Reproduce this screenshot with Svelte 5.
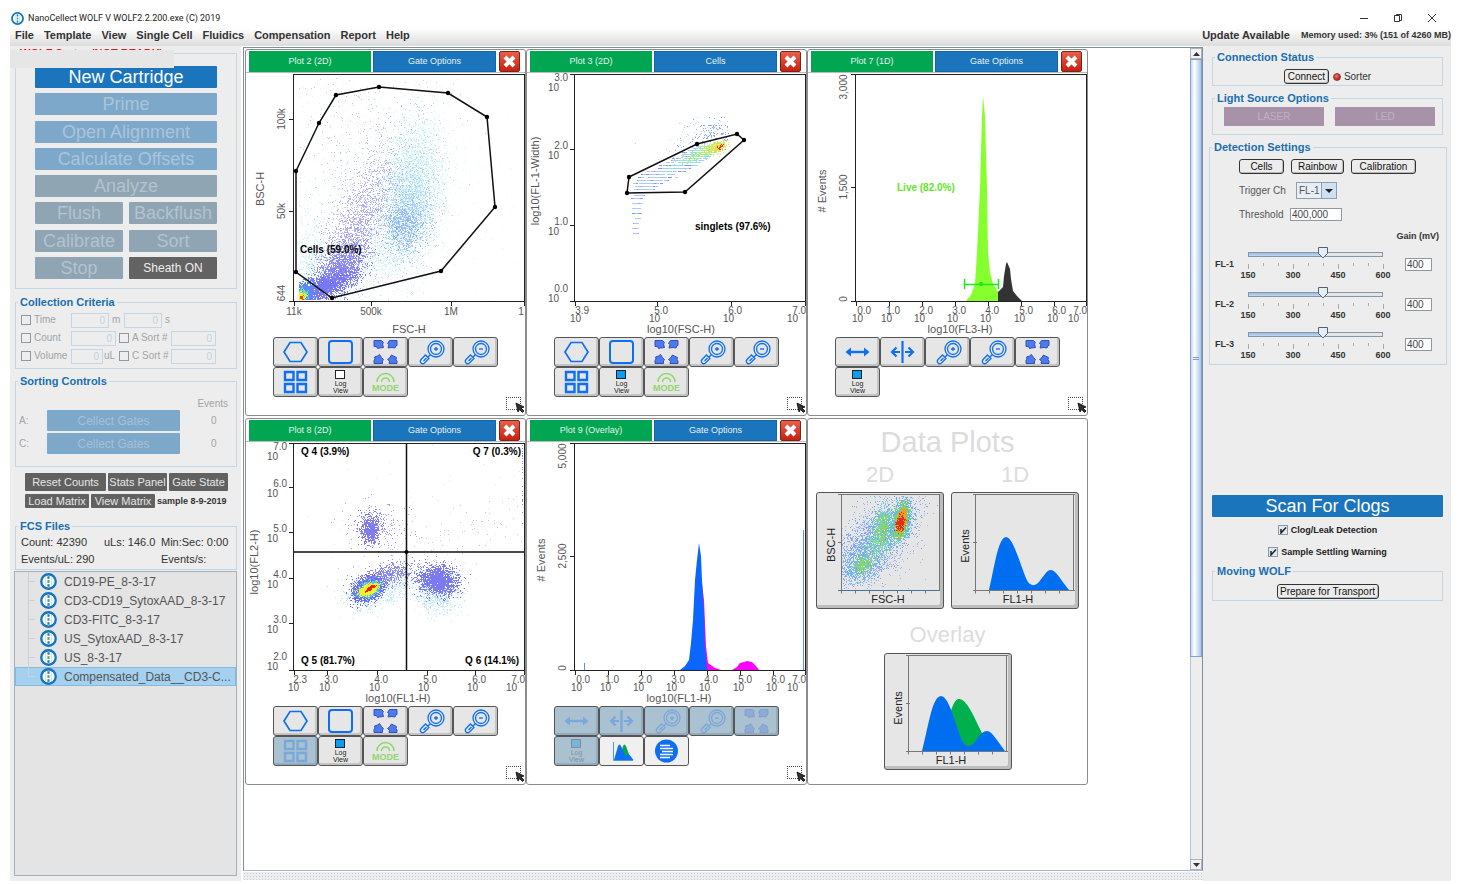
<script lang="ts">
  const menus = ['File', 'Template', 'View', 'Single Cell', 'Fluidics', 'Compensation', 'Report', 'Help'];

  const files = [
    'CD19-PE_8-3-17',
    'CD3-CD19_SytoxAAD_8-3-17',
    'CD3-FITC_8-3-17',
    'US_SytoxAAD_8-3-17',
    'US_8-3-17',
    'Compensated_Data__CD3-C...'
  ];
  let selected = 5;

  let trigger = 'FL-1';
  let threshold = '400,000';
  let clogDetection = true;
  let settlingWarning = true;
  let channels = [
    { name: 'FL-1', gain: 400 },
    { name: 'FL-2', gain: 400 },
    { name: 'FL-3', gain: 400 }
  ];

  // small seeded generator so the plots look the same on every load
  let seed = 7;
  function rnd() {
    seed = (seed + 0x6d2b79f5) | 0;
    let t = Math.imul(seed ^ (seed >>> 15), 1 | seed);
    t = (t + Math.imul(t ^ (t >>> 7), 61 | t)) ^ t;
    return ((t ^ (t >>> 14)) >>> 0) / 4294967296;
  }
  function gauss() {
    return Math.sqrt(-2 * Math.log(rnd() + 1e-9)) * Math.cos(6.2832 * rnd());
  }

  type Box = [number, number, number, number];
  type Dots = { d: string; color: string };

  // n events round (cx, cy), tilted by deg, kept inside the box
  function cloud(n: number, cx: number, cy: number, sx: number, sy: number, deg: number, color: string, box: Box): Dots {
    const a = (deg * Math.PI) / 180;
    let d = '';
    for (let i = 0; i < n; i++) {
      const u = gauss() * sx;
      const v = gauss() * sy;
      const x = Math.round(cx + u * Math.cos(a) - v * Math.sin(a));
      const y = Math.round(cy + u * Math.sin(a) + v * Math.cos(a));
      if (x < box[0] || x > box[2] || y < box[1] || y > box[3]) continue;
      d += `M${x} ${y}h1v1h-1z`;
    }
    return { d, color };
  }

  const b2: Box = [53, 3, 276, 226];
  const cells: Dots[] = [
    cloud(900, 130, 100, 50, 60, -50, '#e0f6fa', b2),
    cloud(380, 125, 75, 40, 50, 0, '#d0c2ea', b2),
    cloud(3200, 164, 122, 16, 38, 8, '#d8f5fb', b2),
    cloud(1300, 164, 124, 13, 32, 8, '#b8e4f7', b2),
    cloud(900, 160, 145, 13, 20, 8, '#a9cdf5', b2),
    cloud(420, 157, 155, 10, 11, 8, '#97b4f1', b2),
    cloud(800, 66, 195, 12, 26, 0, '#ccf5f6', b2),
    cloud(1000, 120, 190, 34, 12, -40, '#dcf3fb', b2),
    cloud(1000, 108, 150, 44, 15, -66, '#ccc8f4', b2),
    cloud(1300, 108, 160, 38, 11, -65, '#aeabf2', b2),
    cloud(1500, 92, 197, 17, 9, -48, '#8f8cf1', b2),
    cloud(1900, 74, 215, 18, 6, -22, '#7a77f2', b2),
    cloud(600, 58, 219, 5, 5, 0, '#5b8cf5', b2),
    cloud(260, 56, 222, 3, 3, 0, '#62e0c0', b2),
    cloud(160, 55, 223, 2, 2, 0, '#f2f22c', b2),
    cloud(30, 55, 224, 1, 1, 0, '#f03c1e', b2)
  ];

  // width values are discrete, so the events fall on horizontal streaks
  function streaks(): Dots[] {
    const out: Record<string, string> = {};
    for (let y = 160; y > 71; y -= y > 126 ? 5 : y > 90 ? 3 : 2) {
      const left = y > 104 ? 104 : 104 + (104 - y) * 2;
      const right = y > 126 ? 110 + (160 - y) * 0.2 : 204 - (y - 72) * 1.7;
      const n = (right - left) * (y > 126 ? 0.6 : 0.75);
      for (let i = 0; i < n; i++) {
        const f = (rnd() + rnd()) / 2;
        const x = Math.round(left + f * (right - left));
        const hot = (x - 95) / 100 - Math.abs(f - 0.5) * 0.9 + rnd() * 0.15;
        const c = hot > 0.95 ? '#f3e24a' : hot > 0.75 ? '#b5ef8c' : hot > 0.5 ? '#93dcee' : rnd() > 0.5 ? '#8496ef' : '#b0caf7';
        out[c] = (out[c] || '') + `M${x} ${y}h3v1h-3z`;
      }
    }
    return Object.entries(out).map(([color, d]) => ({ color, d }));
  }
  const b3: Box = [100, 44, 203, 120];
  const singlets: Dots[] = [
    cloud(130, 185, 58, 12, 8, -15, '#86a6f0', b3),
    cloud(90, 172, 64, 22, 10, -15, '#b4dcf4', b3),
    ...streaks(),
    cloud(150, 172, 80, 14, 3, -22, '#a6ea9a', b3),
    cloud(200, 188, 75, 8, 3, -18, '#c4f062', b3),
    cloud(90, 192, 73, 4, 2, -15, '#f4d83a', b3),
    cloud(22, 193, 73, 2, 1, -25, '#e8331c', b3)
  ];

  const b8: Box = [50, 3, 276, 226];
  const quads: Dots[] = [
    cloud(120, 200, 95, 60, 14, -18, '#c8c2ea', b8),
    cloud(60, 190, 60, 90, 30, 0, '#e4e0f4', b8),
    cloud(190, 131, 84, 16, 12, 0, '#a3a0ee', b8),
    cloud(680, 124, 87, 5, 7, 0, '#7f7bf0', b8),
    cloud(520, 140, 145, 17, 8, -10, '#bfeaf8', b8),
    cloud(650, 139, 133, 13, 5, -14, '#8f8cf0', b8),
    cloud(900, 192, 147, 11, 11, 6, '#bfe8f9', b8),
    cloud(1700, 191, 138, 10, 7, 6, '#7d79f0', b8),
    cloud(300, 118, 152, 11, 8, 0, '#b5e8f6', b8),
    cloud(2400, 121, 147, 7, 5, -25, '#706df2', b8),
    cloud(1400, 122, 147, 5, 3, -25, '#4fc9ee', b8),
    cloud(1400, 122, 147, 4, 2, -25, '#f5f02a', b8),
    cloud(80, 124, 146, 3, 1, -30, '#e8261a', b8),
    cloud(30, 276, 30, 0, 26, 0, '#8a86ee', b8)
  ];

  const bt: Box = [26, 4, 121, 96];
  const thumb: Dots[] = [
    cloud(1100, 58, 50, 32, 16, -48, '#a9b4f2', bt),
    cloud(1600, 58, 50, 28, 12, -50, '#7ba5f0', bt),
    cloud(500, 42, 74, 10, 9, -30, '#72b8f0', bt),
    cloud(500, 67, 36, 6, 12, 10, '#6fd3d6', bt),
    cloud(320, 66, 36, 4, 8, 10, '#85d95e', bt),
    cloud(200, 46, 72, 5, 4, -20, '#85d95e', bt),
    cloud(260, 58, 55, 7, 7, 0, '#86dcb0', bt),
    cloud(1000, 85, 29, 5, 9, 12, '#5fb9ee', bt),
    cloud(900, 85, 29, 3, 8, 12, '#7be04e', bt),
    cloud(500, 85, 29, 2, 6, 12, '#f09a24', bt),
    cloud(200, 84, 31, 2, 4, 12, '#e42c1a', bt)
  ];

  const polyCells = [[50, 98], [73, 50], [90, 22], [133, 14], [202, 20], [241, 44], [249, 134], [195, 198], [86, 225], [50, 199]];
  const polySinglets = [[102, 104], [170, 71], [210, 61], [217, 67], [158, 119], [100, 120]];

  const decades = [
    { t: 48, x: 49, e: '0.0' },
    { t: 81, x: 78, e: '1.0' },
    { t: 114, x: 111, e: '2.0' },
    { t: 147, x: 144, e: '3.0' },
    { t: 180, x: 177, e: '4.0' },
    { t: 213, x: 211, e: '5.0' },
    { t: 246, x: 244, e: '6.0' },
    { t: 278, x: 265, e: '7.0' }
  ];

  type Tick = { t: number; x?: number; y?: number; e?: string; label?: string };
  type Plot = {
    kind: string; name: string; gate: string; xTitle: string; xMid: number; yTitle: string; yBase: number; yMid: number;
    x: Tick[]; y: Tick[]; dots?: Dots[]; poly?: number[][]; tools: string[]; off?: string[]; log?: boolean;
  };

  const tools2d = ['hexagon', 'square', 'fit', 'zoomIn', 'zoomOut', 'quad', 'log', 'mode'];
  const plots: Plot[] = [
    {
      kind: 'cells', name: 'Plot 2 (2D)', gate: 'Gate Options', xTitle: 'FSC-H', xMid: 163, yTitle: 'BSC-H', yBase: 18, yMid: 116,
      x: [{ t: 48, x: 48, label: '11k' }, { t: 125, x: 125, label: '500k' }, { t: 205, x: 205, label: '1M' }, { t: 278, x: 275, label: '1' }],
      y: [{ t: 46, y: 46, label: '100k' }, { t: 138, y: 138, label: '50k' }, { t: 228, y: 220, label: '644' }],
      dots: cells, poly: polyCells, tools: tools2d, log: false
    },
    {
      kind: 'singlets', name: 'Plot 3 (2D)', gate: 'Cells', xTitle: 'log10(FSC-H)', xMid: 154, yTitle: 'log10(FL-1-Width)', yBase: 12, yMid: 108,
      x: [{ t: 48, x: 48, e: '3.9' }, { t: 130, x: 127, e: '5.0' }, { t: 204, x: 201, e: '6.0' }, { t: 278, x: 265, e: '7.0' }],
      y: [{ t: 1, y: 8, e: '3.0' }, { t: 76, y: 76, e: '2.0' }, { t: 152, y: 152, e: '1.0' }, { t: 228, y: 219, e: '0.0' }],
      dots: singlets, poly: polySinglets, tools: tools2d, log: true
    },
    {
      kind: 'live', name: 'Plot 7 (1D)', gate: 'Gate Options', xTitle: 'log10(FL3-H)', xMid: 152, yTitle: '# Events', yBase: 18, yMid: 118,
      x: decades,
      y: [{ t: 1, y: 14, label: '3,000' }, { t: 114, y: 114, label: '1,500' }, { t: 228, y: 226, label: '0' }],
      tools: ['span', 'split', 'zoomIn', 'zoomOut', 'fit', 'log'], log: true
    },
    {
      kind: 'quads', name: 'Plot 8 (2D)', gate: 'Gate Options', xTitle: 'log10(FL1-H)', xMid: 152, yTitle: 'log10(FL2-H)', yBase: 12, yMid: 120,
      x: [{ t: 48, x: 47, e: '2.3' }, { t: 81, x: 78, e: '3.0' }, { t: 131, x: 128, e: '4.0' }, { t: 181, x: 177, e: '5.0' }, { t: 229, x: 226, e: '6.0' }, { t: 278, x: 265, e: '7.0' }],
      y: [{ t: 1, y: 8, e: '7.0' }, { t: 45, y: 45, e: '6.0' }, { t: 90, y: 90, e: '5.0' }, { t: 136, y: 136, e: '4.0' }, { t: 181, y: 181, e: '3.0' }, { t: 228, y: 218, e: '2.0' }],
      dots: quads, tools: tools2d, off: ['quad'], log: true
    },
    {
      kind: 'overlay', name: 'Plot 9 (Overlay)', gate: 'Gate Options', xTitle: 'log10(FL1-H)', xMid: 152, yTitle: '# Events', yBase: 18, yMid: 118,
      x: decades,
      y: [{ t: 1, y: 14, label: '5,000' }, { t: 114, y: 114, label: '2,500' }, { t: 228, y: 226, label: '0' }],
      tools: ['span', 'split', 'zoomIn', 'zoomOut', 'fit', 'log', 'histogram', 'legend'],
      off: ['span', 'split', 'zoomIn', 'zoomOut', 'fit', 'log'], log: true
    }
  ];
</script>

{#snippet logo(size)}
  <svg width={size} height={size} viewBox="0 0 16 16" aria-hidden="true">
    <circle cx="8" cy="8" r="6.8" fill="#fff" stroke="#1474bd" stroke-width="2.2" />
    <path d="M5.4 4.2v7.6M10.6 4.2v7.6" stroke="#b5d8ef" stroke-width=".8" />
    <path d="M7 3h2v2.4H7zM7 10.600h2V13H7z" fill="#1474bd" />
    <path d="M7 6.800h2v2.400H7z" fill="#2eaa55" />
  </svg>
{/snippet}

{#snippet dotPaths(list)}
  <g shape-rendering="crispEdges">
    {#each list as p}<path d={p.d} fill={p.color} />{/each}
  </g>
{/snippet}

{#snippet lens()}
  <circle cx="25" cy="11" r="8" />
  <circle cx="25" cy="11" r="5.500" />
  <path d="M19.500 16.500l-3 3M14.500 17l3.500 3.500-4.500 4.500q-2 1.500-3.500 0t0-3.500zM15.500 20l-3 3" />
{/snippet}

{#snippet toolIcon(name, log)}
  {#if name === 'log'}
    <span class="log"><i class:filled={log}></i>Log<br />View</span>
  {:else}
    <svg width="39" height="28" viewBox="0 0 39 28" fill="none" stroke="#0f6ff2" stroke-width="1.500" aria-hidden="true">
      {#if name === 'hexagon'}
        <path d="M8 14l6-9.500h11l6 9.500-6 9.500H14z" stroke-width="1.700" />
      {:else if name === 'square'}
        <rect x="8" y="3" width="23" height="22" rx="3" stroke-width="2" />
      {:else if name === 'fit'}
        <g fill="#4b7bf0" stroke="#3b4fb0" stroke-width="1">
          <path d="M8 2.500h7.500l2 2-1 1.500 1 3.500-4 .5-2 .5-1-2H8z" />
          <path d="M31 2.500h-7.500l-2 3 1.500 1-1 3.500 4-.5 3 .5 1-2.500h1z" />
          <path d="M8 25.500h8.500v-2.500l1-1.500-2-2-2-3-2 1.500-3 1 .5 2-1 1.500z" />
          <path d="M31 25.500h-8l.5-2.500-2-1.500 2-1.500 2-3 2 1 3 1.500-.5 2 1 1.500z" />
        </g>
      {:else if name === 'zoomIn'}
        <g stroke-width="1.300">{@render lens()}<path d="M25 9v4M23 11h4" /></g>
      {:else if name === 'zoomOut'}
        <g stroke-width="1.300">{@render lens()}<path d="M23 11h4" /></g>
      {:else if name === 'quad'}
        <path d="M9 4h8.500v8H9zM21.500 4H30v8h-8.500zM9 16h8.500v8H9zM21.500 16H30v8h-8.500z" stroke-width="2.400" />
      {:else if name === 'mode'}
        <g stroke="#8fd86a" stroke-width="1.600">
          <path d="M11 14a8.500 8.500 0 0 1 17 0M15.500 14a4 4 0 0 1 8 0" />
          <text x="19.500" y="23" class="mode-text">MODE</text>
        </g>
      {:else if name === 'span'}
        <path d="M9 14h21" stroke-width="2.400" />
        <path d="M13 9.500L7.500 14l5.500 4.500zM26 9.500l5.500 4.500-5.500 4.500z" fill="#0f6ff2" stroke="none" />
      {:else if name === 'split'}
        <path d="M19.500 3v22M9 14h8M22 14h8" stroke-width="2.200" />
        <path d="M13.500 9.500L9 14l4.500 4.500M25.500 9.500L30 14l-4.500 4.500" stroke-width="2.200" />
      {:else if name === 'histogram'}
        <path d="M17 23l4-14q1.500-3 3 0l5 14z" fill="#0aa64c" stroke="none" />
        <path d="M12 23l4-14q1.500-3 3 0l4 9q1 2 2 0 1.500-2 3.500 1l3 4z" fill="#0f6ff2" stroke="none" />
        <path d="M11.500 5v18.500H31" stroke="#4d9ad0" stroke-width="1" />
      {:else if name === 'legend'}
        <circle cx="19.500" cy="14" r="11.500" fill="#0f6ff2" stroke="none" />
        <path d="M13 8.500h10M13 11.500h13M15 14.500h11M13 17.500h13M13 20.500h10" stroke="#fff" />
      {/if}
    </svg>
  {/if}
{/snippet}

<div class="window">
  <header class="titlebar">
    {@render logo(13)}
    <span class="title">NanoCellect WOLF V WOLF2.2.200.exe (C) 2019</span>
    <div class="winbtns">
      <button aria-label="Minimize"><svg width="10" height="10"><path d="M1 5.500h8" stroke="#333" /></svg></button>
      <button aria-label="Restore"><svg width="10" height="10" fill="none" stroke="#333"><path d="M1.500 2.500h5v6h-5zM3.500 2.500v-1h5v6h-2" /></svg></button>
      <button aria-label="Close"><svg width="10" height="10"><path d="M1 1l8 8M9 1L1 9" stroke="#333" /></svg></button>
    </div>
  </header>

  <nav class="menubar">
    {#each menus as m}<button>{m}</button>{/each}
    <button class="update">Update Available</button>
    <span class="memory">Memory used: 3% (151 of 4260 MB)</span>
  </nav>

  <div class="body">
    <aside class="left">
      <div class="mask"></div>
      <fieldset>
        <legend class="alert">WOLF Sorter (NOT READY)</legend>
        <div class="cmds">
          <button class="cmd wide">New Cartridge</button>
          <button class="cmd wide blue" disabled>Prime</button>
          <button class="cmd wide blue" disabled>Open Alignment</button>
          <button class="cmd wide blue" disabled>Calculate Offsets</button>
          <button class="cmd wide grey" disabled>Analyze</button>
          <button class="cmd grey" disabled>Flush</button>
          <button class="cmd grey" disabled>Backflush</button>
          <button class="cmd grey" disabled>Calibrate</button>
          <button class="cmd grey" disabled>Sort</button>
          <button class="cmd grey" disabled>Stop</button>
          <button class="cmd sheath">Sheath ON</button>
        </div>
      </fieldset>

      <fieldset class="criteria">
        <legend>Collection Criteria</legend>
        <div class="inner">
          <div class="crit">
            <label class="c1"><input type="checkbox" disabled />Time</label>
            <input class="num mid" aria-label="Minutes" value="0" disabled /><span class="unit">m</span>
            <input class="num mid" aria-label="Seconds" value="0" disabled /><span class="unit">s</span>
          </div>
          <div class="crit">
            <label class="c1"><input type="checkbox" disabled />Count</label>
            <input class="num long" aria-label="Count" value="0" disabled />
            <label class="c2"><input type="checkbox" disabled />A Sort #</label>
            <input class="num long" aria-label="A sort number" value="0" disabled />
          </div>
          <div class="crit">
            <label class="c1"><input type="checkbox" disabled />Volume</label>
            <input class="num short" aria-label="Volume" value="0" disabled /><span class="ul">uL</span>
            <label class="c2"><input type="checkbox" disabled />C Sort #</label>
            <input class="num long" aria-label="C sort number" value="0" disabled />
          </div>
        </div>
      </fieldset>

      <fieldset class="sorting">
        <legend>Sorting Controls</legend>
        <div class="inner">
          <div class="events">Events</div>
          <div class="gate-row"><span>A:</span><button disabled>Cellect Gates</button><output>0</output></div>
          <div class="gate-row"><span>C:</span><button disabled>Cellect Gates</button><output>0</output></div>
        </div>
      </fieldset>

      <div class="dark-row tall">
        <button class="reset">Reset Counts</button>
        <button>Stats Panel</button>
        <button>Gate State</button>
      </div>
      <div class="dark-row">
        <button>Load Matrix</button>
        <button>View Matrix</button>
        <b>sample 8-9-2019</b>
      </div>

      <fieldset class="fcs">
        <legend>FCS Files</legend>
        <div class="stats">
          <span>Count: 42390</span><span>uLs: 146.0</span><span>Min:Sec: 0:00</span>
          <span>Events/uL: 290</span><span></span><span>Events/s:</span>
        </div>
      </fieldset>

      <ul class="tree">
        {#each files as f, i}
          <li class:selected={i === selected}>
            <button on:click={() => (selected = i)}><i class="branch"></i>{@render logo(17)}<span>{f}</span></button>
          </li>
        {/each}
      </ul>
    </aside>

    <main>
      <div class="view">
        <div class="plots">
          {#each plots as p}
            <section class="plot">
              <div class="plot-head">
                <button class="name">{p.name}</button>
                <button class="gate">{p.gate}</button>
                <button class="close" aria-label="Close plot"><svg width="19" height="19"><path d="M5 5l9 9M14 5l-9 9" stroke="#fff" stroke-width="4" /></svg></button>
              </div>
              <svg class="chart" width="279" height="264" viewBox="0 0 279 264">
                {#if p.dots}{@render dotPaths(p.dots)}{/if}
                {#if p.kind === 'live'}
                  <path d="M158 228l5-6 4-11 2-32 3-63 2-73 1-20 2 20 2 73 1 63 2 20 3 12 5 8v9z" fill="#86ff2e" />
                  <path d="M190 228v-9l5-5 1-11 2-12 1-2 3 7 1 10 2 12 4 5 5 5z" fill="#333" />
                  <path d="M156.500 206v10M156 211.500h34M190.500 206v10" stroke="#1ce61c" stroke-width="1.500" />
                  <circle cx="173" cy="211" r="2" fill="#1ce61c" />
                {:else if p.kind === 'overlay'}
                  <path d="M172 228v-110l5 40 2 46 2 17 7 5 6 2zM205 228l5-3 3-4 4-1 3-1 5 1 4 4 3 4z" fill="#f0f" />
                  <path d="M153 228l5-4 4-6 2-17 2-23 2-40 2-20 2-17 2 13 1 24 2 33 1 33 2 24z" fill="#0a66ff" />
                  <path d="M57.500 221v7M276.500 88v140" stroke="#4a9be0" />
                {/if}
                <rect x="47.500" y="1.500" width="231" height="227" fill="none" stroke="#222" />
                {#each p.x as t}
                  <path d="M{t.t}.5 228v5" stroke="#222" stroke-width="1" />
                  {#if t.e}
                    <text x={(t.x ?? 0) - 5} y="249" class="tick">10<tspan dx="-6" dy="-8">{t.e}</tspan></text>
                  {:else}
                    <text x={t.x} y="242" class="tick mid">{t.label}</text>
                  {/if}
                {/each}
                {#each p.y as t}
                  <path d="M43 {t.t}.5h5" stroke="#222" stroke-width="1" />
                  {#if t.e}
                    <text x="21" y={(t.y ?? 0) + 10} class="tick">10<tspan dx="-5" dy="-10">{t.e}</tspan></text>
                  {:else}
                    <text transform="translate(39 {t.y}) rotate(-90)" class="tick mid">{t.label}</text>
                  {/if}
                {/each}
                <text x={p.xMid} y="260" class="axis">{p.xTitle}</text>
                <text transform="translate({p.yBase} {p.yMid}) rotate(-90)" class="axis">{p.yTitle}</text>
                {#if p.poly}
                  <polygon points={p.poly.map((c) => c.join(',')).join(' ')} fill="none" stroke="#111" stroke-width="1.500" />
                  {#each p.poly as c}<circle cx={c[0]} cy={c[1]} r="2.200" fill="#000" />{/each}
                {/if}
                {#if p.kind === 'cells'}
                  <text x="54" y="180" class="gate-label">Cells (59.0%)</text>
                {:else if p.kind === 'singlets'}
                  <text x="168" y="157" class="gate-label">singlets (97.6%)</text>
                {:else if p.kind === 'live'}
                  <text x="89" y="118" class="gate-label live">Live (82.0%)</text>
                {:else if p.kind === 'quads'}
                  <path d="M160.500 1v227M48 110h230" stroke="#111" stroke-width="1.500" />
                  <circle cx="160.500" cy="110" r="2" />
                  <text x="55" y="13" class="gate-label">Q 4 (3.9%)</text>
                  <text x="275" y="13" class="gate-label end">Q 7 (0.3%)</text>
                  <text x="55" y="222" class="gate-label">Q 5 (81.7%)</text>
                  <text x="273" y="222" class="gate-label end">Q 6 (14.1%)</text>
                {/if}
              </svg>
              <div class="tools">
                {#each p.tools as t}
                  <button class="tool" class:plain={t === 'histogram' || t === 'legend'} disabled={p.off?.includes(t)} aria-label={t}>{@render toolIcon(t, p.log)}</button>
                {/each}
              </div>
              <div class="resize">
                <svg width="19" height="16" viewBox="0 0 19 16">
                  <path d="M0 .5h15M0 12.500h15M.5 0v13M14.500 0v13" stroke="#444" stroke-dasharray="1 1" />
                  <path d="M10 6l8 4-3 1 3 3-1.500 1.500-3-3-1.500 2.500z" fill="#333" stroke="#000" stroke-width=".8" />
                </svg>
              </div>
            </section>
          {/each}

          <section class="plot picker">
            <h2>Data Plots</h2>
            <div class="pair">
              <div>
                <h3>2D</h3>
                <button class="thumb" aria-label="Add 2D plot">
                  <svg width="123" height="112" viewBox="2 2 123 112">
                    {@render dotPaths(thumb)}
                    <path d="M25.500 3v96M123.500 3v96M22 2.500h102M22 50.500h4M25.500 98.500v3M39.500 98.500v3M53.500 98.500v3M67.500 98.500v3M81.500 98.500v3M95.500 98.500v3M109.500 98.500v3" fill="none" stroke="#777" />
                    <path d="M22 98.500h102" stroke="#4a7296" />
                    <text x="72" y="111" class="axis dark">FSC-H</text>
                    <text transform="translate(19 53) rotate(-90)" class="axis dark">BSC-H</text>
                  </svg>
                </button>
              </div>
              <div>
                <h3>1D</h3>
                <button class="thumb" aria-label="Add 1D plot">
                  <svg width="123" height="112" viewBox="2 2 123 112">
                    <path d="M38 98C43 78 47 45 55 45S71 80 77 90q4 6 10 1C92 86 95 78 100 78s11 12 18 20z" fill="#006ef0" />
                    <path d="M24.500 3v96M122.500 3v96M22 2.500h102M22 50.500h4M22 98.500h102M24.500 98.500v3M38.500 98.500v3M52.500 98.500v3M66.500 98.500v3M80.500 98.500v3M94.500 98.500v3M108.500 98.500v3" fill="none" stroke="#777" />
                    <text x="67" y="111" class="axis dark">FL1-H</text>
                    <text transform="translate(18 54) rotate(-90)" class="axis dark">Events</text>
                  </svg>
                </button>
              </div>
            </div>
            <h3>Overlay</h3>
            <button class="thumb" aria-label="Add overlay plot">
              <svg width="123" height="112" viewBox="2 2 123 112">
                <path d="M58 98C63 75 67 46 75 46s15 18 23 34l8 18z" fill="#00b04c" />
                <path d="M38 98C44 76 48 43 57 43S73 79 79 89q5 8 11 1C95 84 98 78 103 78s11 11 18 20z" fill="#006ef0" />
                <path d="M24.500 3v96M122.500 3v96M22 2.500h102M22 50.500h4M22 98.500h102M24.500 98.500v3M38.500 98.500v3M52.500 98.500v3M66.500 98.500v3M80.500 98.500v3M94.500 98.500v3M108.500 98.500v3" fill="none" stroke="#777" />
                <text x="67" y="111" class="axis dark">FL1-H</text>
                <text transform="translate(18 55) rotate(-90)" class="axis dark">Events</text>
              </svg>
            </button>
          </section>
        </div>
        <div class="scroll">
          <button aria-label="Scroll up"><svg width="7" height="4"><path d="M0 4l3.500-4L7 4z" fill="#333" /></svg></button>
          <div class="thumbbar"><i></i></div>
          <div class="rest"></div>
          <button aria-label="Scroll down"><svg width="7" height="4"><path d="M0 0l3.500 4L7 0z" fill="#333" /></svg></button>
        </div>
      </div>
      <div class="divider"></div>
    </main>

    <aside class="right">
      <fieldset>
        <legend>Connection Status</legend>
        <div class="center conn">
          <button class="btn connect">Connect</button><i class="led"></i><span>Sorter</span>
        </div>
      </fieldset>

      <fieldset class="light">
        <legend>Light Source Options</legend>
        <div class="sources">
          <button disabled>LASER</button>
          <button disabled>LED</button>
        </div>
      </fieldset>

      <fieldset class="detect">
        <legend>Detection Settings</legend>
        <div class="inner">
          <div class="presets">
            <button class="btn cells">Cells</button>
            <button class="btn rainbow">Rainbow</button>
            <button class="btn calib">Calibration</button>
          </div>
          <div class="field trig">
            <label for="trigger">Trigger Ch</label>
            <select id="trigger" bind:value={trigger}>
              {#each channels as c}<option>{c.name}</option>{/each}
            </select>
          </div>
          <div class="field">
            <label for="threshold">Threshold</label>
            <input id="threshold" class="value" bind:value={threshold} />
          </div>
          <div class="gain-head">Gain (mV)</div>
          {#each channels as c}
            <div class="channel">
              <label for="gain-{c.name}">{c.name}</label>
              <div class="slide">
                <input id="gain-{c.name}" type="range" min="150" max="600" bind:value={c.gain} />
                <svg width="147" height="22">
                  {#each Array(10) as _, i}<path d="M{6 + i * 15}.5 {i % 3 ? 3 : 4}v{i % 3 ? 3 : 5}" stroke="#aaa" />{/each}
                  {#each [150, 300, 450, 600] as n, i}<text x={6 + i * 45} y="18">{n}</text>{/each}
                </svg>
              </div>
              <input class="value" aria-label="{c.name} gain" bind:value={c.gain} />
            </div>
          {/each}
        </div>
      </fieldset>

      <button class="scan">Scan For Clogs</button>
      <label class="opt"><input type="checkbox" bind:checked={clogDetection} />Clog/Leak Detection</label>
      <label class="opt second"><input type="checkbox" bind:checked={settlingWarning} />Sample Settling Warning</label>

      <fieldset class="moving">
        <legend>Moving WOLF</legend>
        <div class="center prep"><button class="btn prepare">Prepare for Transport</button></div>
      </fieldset>
    </aside>
  </div>
</div>

<style>
  :global(body) { background:#fff; }
  .window { min-height:100vh; box-sizing:border-box; padding:0 11px 3px 10px; display:flex; flex-direction:column; font:10px/12px "Liberation Sans", Arial, sans-serif; color:#333; }
  .window :global(*) { box-sizing:border-box; }
  button { font:inherit; color:inherit; border:0; background:none; padding:0; margin:0; cursor:pointer; white-space:nowrap; }
  button:disabled { cursor:default; }
  svg { display:block; flex:none; overflow:visible; }
  input, select { font:inherit; margin:0; border-radius:0; }

  .titlebar { display:flex; align-items:center; gap:4px; height:28px; padding:8px 14px 0 1px; }
  .title { font-family:Roboto, "Open Sans", sans-serif; font-size:9px; color:#222; }
  .winbtns { margin-left:auto; display:flex; gap:24px; }
  .menubar { display:flex; align-items:center; height:18px; background:linear-gradient(#fff, #dcdcdc); font-size:11px; font-weight:bold; padding-bottom:4px; }
  .menubar button { padding:0 5px; }
  .menubar .update { margin-left:auto; }
  .memory { font-size:9px; padding-left:6px; white-space:nowrap; }

  .body { display:flex; flex:1; }
  fieldset { border:1px solid #c3d6e6; margin:0; min-width:0; padding:0; }
  legend { color:#1a6fb0; font-size:11px; font-weight:bold; line-height:12px; padding:0 2px; margin-left:2px; }

  .left { position:relative; flex:none; width:231px; background:#ededed; padding:1px 4px 5px 5px; display:flex; flex-direction:column; }
  .mask { position:absolute; left:0; top:4px; width:164px; height:18px; background:#e6e6e6; }
  legend.alert { color:#e01818; }
  .cmds { display:grid; grid-template-columns:1fr 1fr; column-gap:6px; height:229px; padding:7px 19px 9px; align-content:space-between; }
  .cmd { height:22px; border-radius:1px; background:#1a75bc; color:#fff; font-size:18px; line-height:22px; }
  .cmd.wide { grid-column:span 2; }
  .cmd.blue { background:#7ea8c9; color:#a9c5dc; }
  .cmd.grey { background:#8fa5b3; color:#b3c3cf; }
  .cmd.sheath { background:#636363; color:#eee; font-size:12px; }

  .criteria { margin-top:7px; color:#a0a4a8; }
  .criteria .inner { padding:4px 5px; }
  .crit { display:flex; align-items:center; height:16px; }
  .crit + .crit { margin-top:2px; }
  .crit label { display:flex; align-items:center; gap:3px; flex:none; }
  .c1 { width:50px; }
  .c2 { width:52px; margin-left:3px; }
  input[type=checkbox] { appearance:none; width:10px; height:10px; border:1px solid #8d9aa6; background:#eee; flex:none; }
  .num { height:15px; border:1px solid #c3d6e6; background:#ededed; color:#c0d3e4; text-align:right; padding:0 3px; }
  .num.mid { width:38px; }
  .num.long { width:45px; }
  .num.short { width:32px; }
  .unit { width:15px; padding-left:3px; }
  .ul { width:13px; padding-left:1px; }

  .sorting { margin-top:6px; color:#a0a4a8; }
  .sorting .inner { padding:11px 8px 12px 3px; }
  .events { text-align:right; }
  .gate-row { display:flex; align-items:center; height:21px; }
  .gate-row + .gate-row { margin-top:2px; }
  .gate-row span { width:28px; }
  .gate-row button { width:133px; height:21px; border-radius:1px; background:#7ea8c9; color:#a3c1d9; font-size:12px; }
  .gate-row output { margin-left:31px; }

  .dark-row { display:flex; gap:2px; padding:0 9px 0 10px; margin-top:3px; align-items:center; }
  .dark-row.tall { margin-top:6px; }
  .dark-row button { width:64px; height:14px; line-height:14px; background:#616161; color:#e6e6e6; font-size:11px; border-radius:1px; }
  .dark-row.tall button { width:59px; height:18px; }
  .dark-row .reset { flex:1; }
  .dark-row b { font-size:9px; white-space:nowrap; }

  .fcs { margin-top:12px; }
  .stats { display:grid; grid-template-columns:83px 57px 1fr; padding:2px 5px 1px; font-size:11px; line-height:17px; white-space:nowrap; }
  .tree { flex:1; list-style:none; margin:1px 0 0 -1px; padding:0; border:1px solid #9fb2c4; background:#e4e4e4; }
  .tree li { height:19px; border:1px solid transparent; }
  .tree li.selected { background:#a4d1ef; border-color:#86b9de; }
  .tree button { display:flex; align-items:center; width:100%; height:17px; font-size:12px; color:#555; }
  .branch { width:7px; height:19px; margin:0 5px 0 12px; border-left:1px solid #c6d3df; background:linear-gradient(#c6d3df, #c6d3df) 0 9px / 7px 1px no-repeat; }
  .tree li:last-child .branch { height:10px; margin-bottom:9px; }
  .tree button span { margin-left:7px; }

  main { flex:1; min-width:0; margin:1px 0 0 2px; display:flex; flex-direction:column; }
  .view { flex:1; display:flex; border:1px solid #7f8f9f; border-bottom-color:#a8b8c8; background:#fff; }
  .plots { flex:1; min-width:0; padding:1px 0 0 1px; display:grid; grid-template-columns:repeat(3, 281px); grid-auto-rows:367px; row-gap:2px; align-content:start; }
  .plot { border:1px solid #8c8c8c; border-radius:3px; display:flex; flex-direction:column; }
  .plot-head { display:flex; align-items:center; height:24px; padding-left:3px; border-bottom:1px solid #bbb; font-size:9px; color:#e6f2ee; }
  .name { width:122px; height:21px; background:#00a651; }
  .gate { width:123px; height:21px; margin:0 3px 0 2px; background:#1a75bc; border:1px solid #1266a8; }
  .close { width:21px; height:21px; background:linear-gradient(#e8604c, #c8200f); border:1px solid #7c2218; border-radius:2px; }
  .chart text { fill:#555; }
  .tick { font-size:10px; }
  .mid, .axis { text-anchor:middle; }
  .axis { font-size:11px; fill:#555; }
  .axis.dark { fill:#222; }
  .chart .gate-label { font-size:10px; font-weight:bold; fill:#000; }
  .chart .live { fill:#5fe61e; }
  .end { text-anchor:end; }
  .tools { display:flex; flex-wrap:wrap; width:252px; padding-left:27px; }
  .tool { width:45px; height:30px; display:flex; align-items:center; justify-content:center; border:1px solid #555; border-radius:3px; background:#e6e6e6; box-shadow:inset -2px -2px 0 #c4c4c4; }
  .tool:disabled { background:#a9c1d0; box-shadow:inset -2px -2px 0 #93abbb; }
  .tool:disabled svg, .tool:disabled .log { opacity:.3; }
  .tool.plain { background:#f0f0f0; box-shadow:none; }
  .log { display:block; font-size:7px; line-height:7px; color:#222; text-align:center; }
  .log i { display:block; width:10px; height:9px; margin:0 auto 1px; border:1px solid #222; background:#fff; }
  .log i.filled { background:#0a9cf0; }
  .mode-text { font-size:9px; font-weight:bold; fill:#8fd86a; stroke:none; text-anchor:middle; }
  .resize { margin-top:auto; display:flex; justify-content:flex-end; padding:0 0 2px; }

  .picker { align-items:center; padding-top:7px; }
  .picker h2, .picker h3 { margin:0; font-weight:normal; color:#dcdcdc; text-align:center; }
  .picker h2 { font-size:29px; line-height:32px; }
  .picker h3 { font-size:22px; line-height:34px; }
  .picker > h3 { margin-top:8px; line-height:36px; }
  .pair { display:flex; gap:7px; }
  .thumb { display:flex; width:128px; height:117px; padding:1px; border:1px solid #555; border-radius:3px; background:#e6e6e6; box-shadow:inset -3px -3px 0 #bdbdbd; }

  .scroll { flex:none; width:12px; display:flex; flex-direction:column; background:#ededed; }
  .scroll button { height:11px; display:flex; align-items:center; justify-content:center; border:1px solid #a8b4c0; background:#f2f2f2; }
  .thumbbar { flex:600; display:flex; align-items:center; justify-content:center; border:1px solid #7f9fcf; background:linear-gradient(90deg, #c8daf0, #fff 35%, #a9c6e8); }
  .thumbbar i { width:6px; height:3px; border:1px solid #7f9fcf; border-width:1px 0; }
  .rest { flex:203; border-left:1px solid #b8c4d0; }
  .divider { height:8px; margin:1px 0; background:radial-gradient(#c6ccd2 1px, #ededed 1px) 0 0 / 3px 3px; }

  .right { flex:none; width:248px; background:#ededed; padding:5px 8px 0 9px; display:flex; flex-direction:column; }
  .center { display:flex; align-items:center; justify-content:center; }
  .btn { height:15px; line-height:13px; border:1px solid #333; border-radius:3px; background:#ececec; box-shadow:inset -1px -1px 0 #bbb; color:#111; }
  .conn { padding:6px 0 1px; }
  .connect { width:45px; }
  .led { width:8px; height:8px; margin:0 3px 0 4px; border-radius:50%; background:radial-gradient(circle at 40% 35%, #f08070, #c0281c 60%); border:1px solid #8c3a30; }
  .light { margin-top:6px; }
  .sources { display:flex; gap:11px; padding:3px 7px 8px 11px; }
  .sources button { flex:1; height:19px; background:#a892aa; color:#bdb0c4; }
  .detect { margin:6px -4px 0 -3px; }
  .detect .inner { padding:6px 14px 2px 5px; }
  .presets { display:flex; gap:7px; padding-left:24px; }
  .cells { width:45px; }
  .rainbow { width:53px; }
  .calib { width:65px; }
  .field { display:flex; align-items:center; height:17px; margin-top:7px; padding-left:24px; }
  .field.trig { margin-top:8px; }
  .field label { width:51px; color:#555; }
  .field.trig label { width:57px; }
  select { appearance:none; width:41px; height:17px; padding:0 2px; color:#555; border:1px solid #8aa0b6; background:url("data:image/svg+xml,%3Csvg xmlns='http://www.w3.org/2000/svg' width='15' height='15'%3E%3Cpath d='M0 0h15v15H0z' fill='%23cfe0f0'/%3E%3Cpath d='M.5 0v15' stroke='%238aa0b6'/%3E%3Cpath d='M4 6h8l-4 4z' fill='%23222'/%3E%3C/svg%3E") right center no-repeat #e8eef4; }
  .value { height:13px; border:1px solid #8d9aa6; background:#fff; color:#444; padding:0 1px; }
  .field .value { width:52px; }
  .gain-head { font-size:9px; font-weight:bold; text-align:right; margin:7px -7px 4px 0; }
  .channel { display:flex; align-items:center; height:36px; }
  .channel + .channel { margin-top:4px; }
  .channel label { width:27px; font-size:9px; font-weight:bold; }
  .channel .value { width:27px; margin-left:16px; }
  .slide text { font-size:9px; font-weight:bold; fill:#333; text-anchor:middle; }
  input[type=range] { appearance:none; display:block; width:147px; height:13px;
    background:linear-gradient(#9dbbe0, #c3d6ee) 7px 6px / 74px 3px no-repeat, linear-gradient(#e6e6e6, #e6e6e6) 7px 6px / 133px 3px no-repeat, linear-gradient(#8796aa, #8796aa) 6px 5px / 135px 5px no-repeat; }
  input[type=range]::-webkit-slider-thumb { appearance:none; width:12px; height:12px; background:url("data:image/svg+xml,%3Csvg xmlns='http://www.w3.org/2000/svg' width='12' height='12'%3E%3Cpath d='M1.500.5h9v6L6 11 1.500 6.500z' fill='%23e4ecf6' stroke='%23556070'/%3E%3C/svg%3E") no-repeat; }

  .scan { margin-top:130px; width:100%; height:22px; background:#1a75bc; color:#fff; font-size:18px; line-height:22px; border-radius:1px; }
  .opt { display:flex; align-items:center; justify-content:center; gap:3px; height:12px; margin-top:7px; font-size:9px; font-weight:bold; color:#222; }
  .opt.second { margin-top:10px; }
  .opt input:checked { background:url("data:image/svg+xml,%3Csvg xmlns='http://www.w3.org/2000/svg' width='8' height='8'%3E%3Cpath d='M2 3v4L7 1.500' fill='none' stroke='%23222' stroke-width='1.500'/%3E%3C/svg%3E") no-repeat #dfe9f4; }
  .moving { margin-top:7px; }
  .prep { padding:7px 0 1px; }
  .prepare { width:102px; }
</style>
